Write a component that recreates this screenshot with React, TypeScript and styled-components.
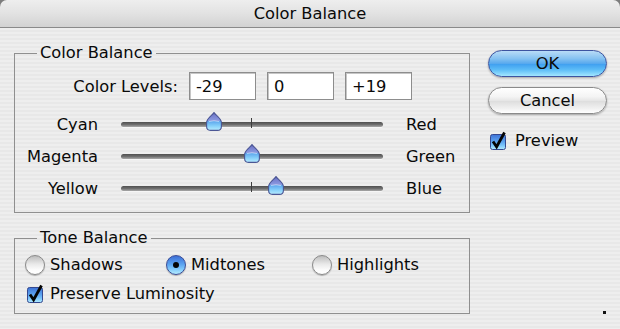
import React from "react";
import styled, { createGlobalStyle } from "styled-components";

const GlobalStyle = createGlobalStyle`
  html, body { margin: 0; padding: 0; background: #7d7d7d; }
  body {
    font-family: "DejaVu Sans", Verdana, sans-serif;
    font-size: 16.3px;
    color: #0a0a0a;
  }
  * { box-sizing: border-box; }
`;

const Window = styled.div`
  width: 620px;
  height: 329px;
  display: flex;
  flex-direction: column;
  overflow: hidden;
`;

const TitleBar = styled.div`
  height: 28px;
  flex: none;
  border-bottom: 1px solid #8a8a8a;
  border-radius: 7px 7px 0 0;
  background: linear-gradient(#eeeeee, #e2e2e2 50%, #d2d2d2);
  display: flex;
  align-items: center;
  justify-content: center;
  line-height: 18px;
  padding-top: 1px;
`;

const Body = styled.div`
  flex: 1;
  display: flex;
  padding: 16px 0 15px 14px;
  background: repeating-linear-gradient(
    to bottom,
    #eeeeee 0px,
    #eeeeee 2px,
    #e8e8e8 2px,
    #e8e8e8 4px
  );
`;

const LeftColumn = styled.div`
  width: 456px;
  display: flex;
  flex-direction: column;
  gap: 16px;
`;

const Group = styled.fieldset<{ $pad: string }>`
  margin: 0;
  min-width: 0;
  padding: ${(p) => p.$pad};
  border: 1px solid #8f8f8f;
`;

const Legend = styled.legend`
  margin-left: 22px;
  padding: 0 3px;
  line-height: 18px;
`;

const LevelsRow = styled.div`
  display: flex;
  align-items: center;
  gap: 11px;
  height: 28px;
  margin-bottom: 8px;
`;

const LevelsLabel = styled.span`
  width: 163px;
  text-align: right;
`;

const LevelInput = styled.input`
  width: 67px;
  height: 28px;
  border: 1px solid #8d8d8d;
  box-shadow: inset 1px 1px 0 #c6c6c6;
  background: #fff;
  font: inherit;
  color: #0a0a0a;
  padding: 0 6px;
  outline: none;
`;

const SliderRow = styled.div`
  display: grid;
  grid-template-columns: 83px 262px 1fr;
  column-gap: 23px;
  align-items: center;
  height: 32px;
`;

const SideLabel = styled.span<{ $align: "left" | "right" }>`
  text-align: ${(p) => p.$align};
  line-height: 18px;
  padding-top: 2px;
`;

const Track = styled.div`
  position: relative;
  height: 32px;
  display: flex;
  align-items: center;
`;

const TrackLine = styled.div`
  width: 100%;
  height: 5px;
  border-radius: 3px;
  background: linear-gradient(#4f4f4f, #6e6e6e 50%, #a9a9a9);
  box-shadow: 0 1px 0 #f6f6f6;
`;

const Tick = styled.div`
  position: absolute;
  left: 130px;
  top: 10px;
  width: 1px;
  height: 10px;
  background: #3e3e3e;
`;

const ThumbWrap = styled.div`
  position: absolute;
  top: 4px;
  width: 16px;
  height: 19px;
  display: flex;
`;

const RadioRow = styled.div`
  display: grid;
  grid-template-columns: 141px 146px auto;
  height: 20px;
  align-items: center;
  padding-left: 10px;
`;

const Item = styled.label<{ $gap: number }>`
  display: flex;
  align-items: center;
  gap: ${(p) => p.$gap}px;
  height: 20px;
  line-height: 18px;
`;

const Slot = styled.span`
  width: 20px;
  height: 20px;
  display: flex;
  align-items: center;
  justify-content: center;
  flex: none;
`;

const RadioCircle = styled.span<{ $on: boolean }>`
  width: 20px;
  height: 20px;
  border-radius: 50%;
  display: flex;
  align-items: center;
  justify-content: center;
  border: 1px solid ${(p) => (p.$on ? "#3a4c96" : "#8a8a8a")};
  background: ${(p) =>
    p.$on
      ? "linear-gradient(#3d6fd6, #5aa2f0 45%, #7cc6fb 70%, #b4ecff)"
      : "linear-gradient(#bdbdbd, #e9e9e9 45%, #fbfbfb 75%, #ffffff)"};
  box-shadow: 0 1px 1px rgba(0, 0, 0, 0.25);
`;

const RadioDot = styled.span`
  width: 6px;
  height: 6px;
  border-radius: 50%;
  background: #050505;
`;

const CheckRow = styled.div`
  margin-top: 9px;
  height: 20px;
  display: flex;
  align-items: center;
  padding-left: 10px;
`;

const RightColumn = styled.div`
  width: 119px;
  margin-left: 18px;
  padding-top: 6px;
  display: flex;
  flex-direction: column;
`;

const Button = styled.button<{ $primary?: boolean }>`
  height: 27px;
  width: 100%;
  border-radius: 14px;
  font: inherit;
  color: #0a0a0a;
  padding: 0;
  line-height: 18px;
  border: 1px solid ${(p) => (p.$primary ? "#3d54a0" : "#8a8a8a")};
  background: ${(p) =>
    p.$primary
      ? "linear-gradient(#b9dcf7 0%, #86c2f1 30%, #58a9ee 50%, #3f9ff0 52%, #5dbdf7 75%, #a2e6ff 100%)"
      : "linear-gradient(#ffffff 0%, #f4f4f4 35%, #e6e6e6 50%, #dddddd 52%, #efefef 80%, #ffffff 100%)"};
  box-shadow: 0 1px 2px rgba(0, 0, 0, 0.3);
  & + & {
    margin-top: 10px;
  }
`;

const PreviewRow = styled.div`
  margin-top: 17px;
  height: 20px;
  display: flex;
  align-items: center;
`;

const GrowDot = styled.div`
  margin-top: auto;
  align-self: flex-end;
  margin-right: 1px;
  width: 3px;
  height: 3px;
  background: #111;
`;

const Thumb: React.FC<{ value: number }> = ({ value }) => {
  const left = ((value + 100) / 200) * 261 - 8;
  return (
    <ThumbWrap style={{ left: `${left}px` }}>
      <svg width="16" height="19" viewBox="0 0 16 19">
        <defs>
          <linearGradient id={`tg${value}`} x1="0" y1="0" x2="0" y2="1">
            <stop offset="0" stopColor="#6a6fc4" />
            <stop offset="0.45" stopColor="#8b9ae0" />
            <stop offset="0.5" stopColor="#5fa8ee" />
            <stop offset="0.75" stopColor="#86d0fa" />
            <stop offset="1" stopColor="#b8ecff" />
          </linearGradient>
        </defs>
        <path
          d="M8 0.6 C9.5 3 15.4 6.5 15.4 10.5 L15.4 14.5 Q15.4 18.4 11.5 18.4 L4.5 18.4 Q0.6 18.4 0.6 14.5 L0.6 10.5 C0.6 6.5 6.5 3 8 0.6 Z"
          fill={`url(#tg${value})`}
          stroke="#4b5694"
          strokeWidth="1.1"
        />
        <path d="M3 9.5 Q8 8 13 9.5" stroke="#ffffff" strokeOpacity="0.5" strokeWidth="1" fill="none" />
      </svg>
    </ThumbWrap>
  );
};

const CheckBox: React.FC = () => (
  <svg width="20" height="20" viewBox="0 0 20 20">
    <defs>
      <linearGradient id="cbg" x1="0" y1="0" x2="0" y2="1">
        <stop offset="0" stopColor="#3e72d6" />
        <stop offset="0.5" stopColor="#5ea6f1" />
        <stop offset="0.75" stopColor="#7fc9fb" />
        <stop offset="1" stopColor="#b4ecff" />
      </linearGradient>
    </defs>
    <rect x="2.5" y="3.5" width="15" height="15" rx="2" fill="url(#cbg)" stroke="#34488f" />
    <path d="M5 10.5 L8.6 15.8 L16.5 1.5" stroke="#050505" strokeWidth="2.8" fill="none" strokeLinejoin="miter" />
  </svg>
);

const Slider: React.FC<{ left: string; right: string; value: number }> = ({ left, right, value }) => (
  <SliderRow>
    <SideLabel $align="right">{left}</SideLabel>
    <Track>
      <TrackLine />
      <Tick />
      <Thumb value={value} />
    </Track>
    <SideLabel $align="left">{right}</SideLabel>
  </SliderRow>
);

const Radio: React.FC<{ label: string; on?: boolean }> = ({ label, on = false }) => (
  <Item $gap={5}>
    <Slot>
      <RadioCircle $on={on}>{on && <RadioDot />}</RadioCircle>
    </Slot>
    {label}
  </Item>
);

export default function App() {
  return (
    <>
      <GlobalStyle />
      <Window>
        <TitleBar>Color Balance</TitleBar>
        <Body>
          <LeftColumn>
            <Group $pad="10px 0 8px 0">
              <Legend>Color Balance</Legend>
              <LevelsRow>
                <LevelsLabel>Color Levels:</LevelsLabel>
                <LevelInput defaultValue="-29" />
                <LevelInput defaultValue="0" />
                <LevelInput defaultValue="+19" />
              </LevelsRow>
              <Slider left="Cyan" right="Red" value={-29} />
              <Slider left="Magenta" right="Green" value={0} />
              <Slider left="Yellow" right="Blue" value={19} />
            </Group>
            <Group $pad="8px 0 9px 0">
              <Legend>Tone Balance</Legend>
              <RadioRow>
                <Radio label="Shadows" />
                <Radio label="Midtones" on />
                <Radio label="Highlights" />
              </RadioRow>
              <CheckRow>
                <Item $gap={5}>
                  <Slot>
                    <CheckBox />
                  </Slot>
                  Preserve Luminosity
                </Item>
              </CheckRow>
            </Group>
          </LeftColumn>
          <RightColumn>
            <Button $primary>OK</Button>
            <Button>Cancel</Button>
            <PreviewRow>
              <Item $gap={7}>
                <Slot>
                  <CheckBox />
                </Slot>
                Preview
              </Item>
            </PreviewRow>
            <GrowDot />
          </RightColumn>
        </Body>
      </Window>
    </>
  );
}
